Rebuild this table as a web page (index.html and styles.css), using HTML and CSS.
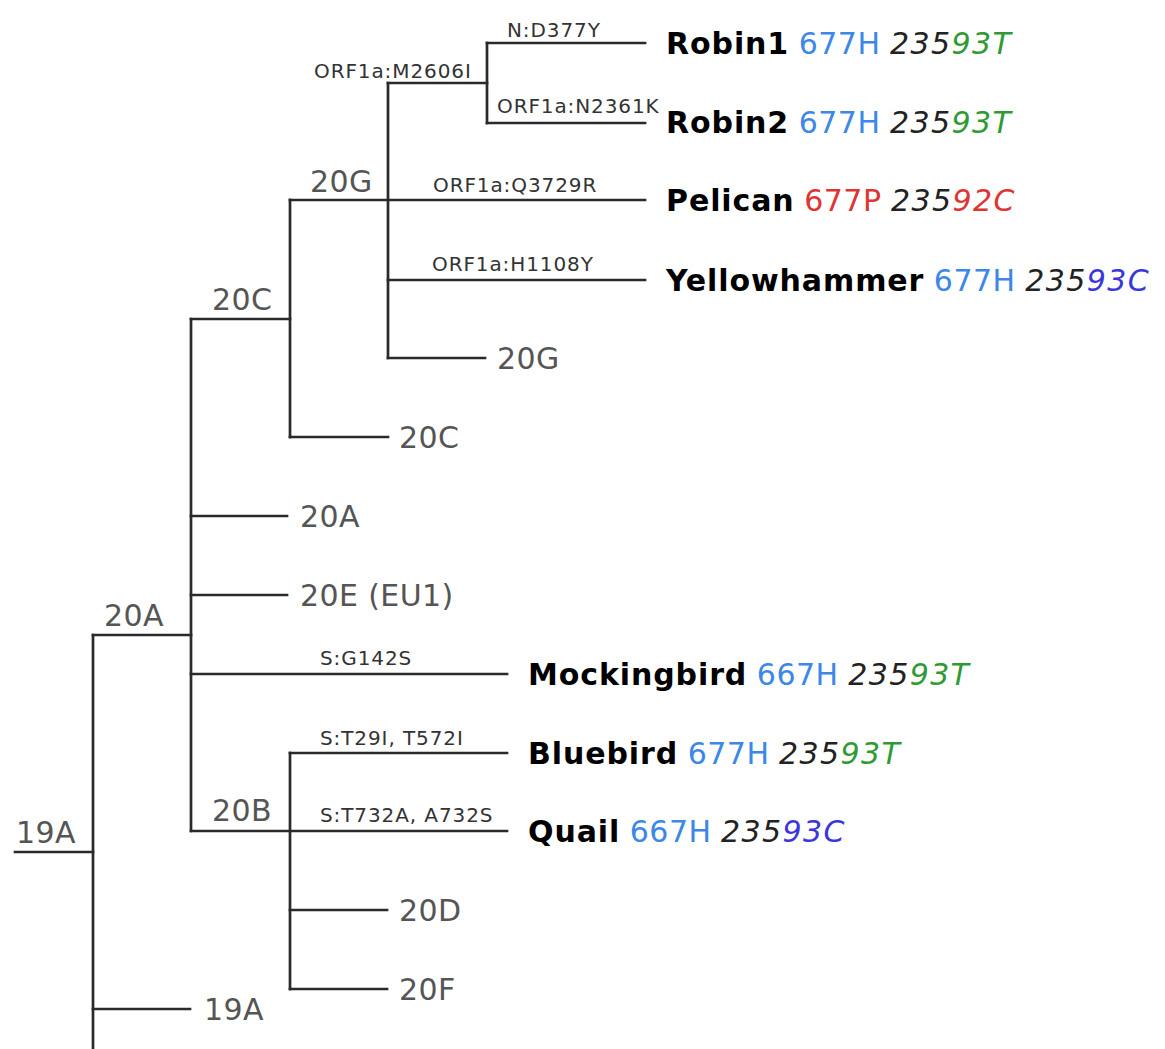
FILE: index.html
```html
<!DOCTYPE html>
<html lang="en">
<head>
<meta charset="utf-8">
<title>Phylogenetic tree</title>
<link rel="stylesheet" href="styles.css">
</head>
<body>
<main class="tree">
<svg class="tree-svg" width="1165" height="1049" viewBox="0 0 1165 1049" xmlns="http://www.w3.org/2000/svg">
  <g class="branches">
    <path d="M15 852 H93"/>
    <path d="M93 635 V1052"/>
    <path d="M93 635 H191"/>
    <path d="M93 1009 H190"/>
    <path d="M191 319 V831"/>
    <path d="M191 319 H290"/>
    <path d="M290 200 V437"/>
    <path d="M290 200 H645"/>
    <path d="M388 83 V358"/>
    <path d="M388 83 H487"/>
    <path d="M487 43 V123"/>
    <path d="M487 43 H645"/>
    <path d="M487 123 H645"/>
    <path d="M388 280 H645"/>
    <path d="M388 358 H485"/>
    <path d="M290 437 H388"/>
    <path d="M191 516 H287"/>
    <path d="M191 595 H287"/>
    <path d="M191 674 H507"/>
    <path d="M191 831 H507"/>
    <path d="M290 753 V989"/>
    <path d="M290 753 H507"/>
    <path d="M290 910 H387"/>
    <path d="M290 989 H387"/>
  </g>

  <g class="clades">
    <text x="16" y="843">19A</text>
    <text x="104" y="626">20A</text>
    <text x="212" y="310">20C</text>
    <text x="310" y="192">20G</text>
    <text x="212" y="821">20B</text>
    <text x="497" y="369">20G</text>
    <text x="399" y="448">20C</text>
    <text x="300" y="527">20A</text>
    <text x="300" y="606">20E (EU1)</text>
    <text x="399" y="921">20D</text>
    <text x="399" y="1000">20F</text>
    <text x="204" y="1020">19A</text>
  </g>

  <g class="mutations">
    <text x="314" y="78">ORF1a:M2606I</text>
    <text x="507" y="37">N:D377Y</text>
    <text x="497" y="113">ORF1a:N2361K</text>
    <text x="433" y="192">ORF1a:Q3729R</text>
    <text x="432" y="271">ORF1a:H1108Y</text>
    <text x="320" y="665">S:G142S</text>
    <text x="320" y="745">S:T29I, T572I</text>
    <text x="320" y="822">S:T732A, A732S</text>
  </g>

  <g class="tips">
    <text x="666" y="54"><tspan class="name">Robin1</tspan> <tspan class="aa-h">677H</tspan> <tspan class="nt">235<tspan class="nt-t">93T</tspan></tspan></text>
    <text x="666" y="133"><tspan class="name">Robin2</tspan> <tspan class="aa-h">677H</tspan> <tspan class="nt">235<tspan class="nt-t">93T</tspan></tspan></text>
    <text x="666" y="211"><tspan class="name">Pelican</tspan> <tspan class="aa-p">677P</tspan> <tspan class="nt">235<tspan class="nt-c-red">92C</tspan></tspan></text>
    <text x="666" y="291"><tspan class="name">Yellowhammer</tspan> <tspan class="aa-h">677H</tspan> <tspan class="nt">235<tspan class="nt-c">93C</tspan></tspan></text>
    <text x="528" y="685"><tspan class="name">Mockingbird</tspan> <tspan class="aa-h">667H</tspan> <tspan class="nt">235<tspan class="nt-t">93T</tspan></tspan></text>
    <text x="528" y="764"><tspan class="name">Bluebird</tspan> <tspan class="aa-h">677H</tspan> <tspan class="nt">235<tspan class="nt-t">93T</tspan></tspan></text>
    <text x="528" y="842"><tspan class="name">Quail</tspan> <tspan class="aa-h">667H</tspan> <tspan class="nt">235<tspan class="nt-c">93C</tspan></tspan></text>
  </g>
</svg>
</main>
</body>
</html>
```

FILE: styles.css
```css
html, body {
  margin: 0;
  padding: 0;
  background: #ffffff;
}

.tree {
  width: 1165px;
  height: 1049px;
  overflow: hidden;
}

.tree-svg {
  display: block;
  font-family: "DejaVu Sans", Verdana, sans-serif;
}

.branches path {
  fill: none;
  stroke: #2a2a2a;
  stroke-width: 2.7;
  stroke-linecap: square;
}

.clades text {
  font-size: 30px;
  letter-spacing: 0.4px;
  fill: #555555;
}

.mutations text {
  font-size: 20px;
  letter-spacing: 0.9px;
  fill: #333333;
}

.tips text {
  font-size: 30px;
  fill: #111111;
  white-space: pre;
}

.tips .name {
  font-weight: bold;
  letter-spacing: 0.9px;
  fill: #000000;
}

.tips .aa-h {
  letter-spacing: 0.5px;
  fill: #3d87e6;
}

.tips .aa-p {
  letter-spacing: 0.5px;
  fill: #dd3434;
}

.tips .nt {
  font-style: italic;
  letter-spacing: 1.4px;
  fill: #222222;
}

.tips .nt-t {
  fill: #2f9a33;
}

.tips .nt-c {
  fill: #3b36d8;
}

.tips .nt-c-red {
  fill: #dd3434;
}
```
